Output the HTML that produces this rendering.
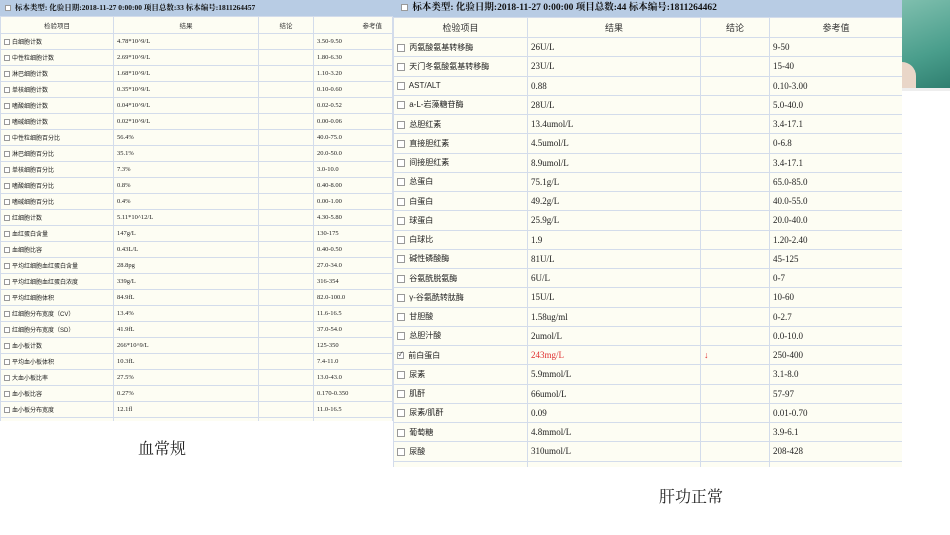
<!DOCTYPE html>
<html><head><meta charset="utf-8"><style>
body{margin:0;width:950px;height:535px;background:#fff;position:relative;overflow:hidden;font-family:"Liberation Serif","Noto Serif CJK SC",serif;}
.p{position:absolute;background:#fdfdf3;overflow:hidden;}
.bar{background:#b8cce4;color:#111;font-weight:bold;white-space:nowrap;}
table{border-collapse:collapse;table-layout:fixed;position:absolute;left:0;}
td{border:1px solid #d3dceb;white-space:nowrap;overflow:hidden;padding:0 0 0 3px;color:#222;vertical-align:middle;}
th{border:1px solid #d3dceb;font-weight:normal;color:#333;font-family:"Liberation Sans","Noto Sans CJK SC",sans-serif;}
td.n{font-family:"Liberation Sans","Noto Sans CJK SC",sans-serif;}
#L td.n{font-size:6px;}
#R td.n{font-size:8px;}
.cb{display:inline-block;border:1px solid #999;background:#fff;vertical-align:middle;margin-right:2px;}
#L .cb{width:4px;height:4px;}
#R .cb{width:6px;height:6px;}
.lab{position:absolute;font-size:16px;color:#222;}
</style></head><body>
<div class="p" id="L" style="left:0;top:0;width:394px;height:421px;">
<div class="bar" style="height:16px;line-height:16px;font-size:7.5px;padding-left:5px;"><span class="cb" style="width:4px;height:4px"></span> 标本类型: 化验日期:2018-11-27 0:00:00 项目总数:33 标本编号:1811264457</div>
<table style="top:16px;width:392px;font-size:6.5px;">
<colgroup><col style="width:113px"><col style="width:145px"><col style="width:55px"><col style="width:79px"></colgroup>
<tr style="height:17px"><th>检验项目</th><th>结果</th><th>结论</th><th style="text-align:right;padding-right:10px">参考值</th></tr>
<tbody id="lb"></tbody></table></div>
<div class="p" id="R" style="left:393px;top:0;width:509px;height:467px;">
<div class="bar" style="height:17px;line-height:17px;font-size:9.5px;padding-left:8px;"><span class="cb" style="width:5px;height:5px"></span> 标本类型: 化验日期:2018-11-27 0:00:00 项目总数:44 标本编号:1811264462</div>
<table style="top:17px;width:509px;font-size:9px;">
<colgroup><col style="width:134px"><col style="width:173px"><col style="width:69px"><col style="width:133px"></colgroup>
<tr style="height:20px"><th>检验项目</th><th>结果</th><th>结论</th><th>参考值</th></tr>
<tbody id="rb"></tbody></table></div>
<div style="position:absolute;left:902px;top:0;width:48px;height:88px;background:linear-gradient(160deg,#7fbfae,#4a9e8c 60%,#2f7f70);"></div>
<div style="position:absolute;left:902px;top:62px;width:14px;height:26px;background:#e9d6c8;border-radius:0 14px 0 0;"></div>
<div style="position:absolute;left:902px;top:88px;width:48px;height:3px;background:#eee;"></div>
<div class="lab" style="left:138px;top:436px;">血常规</div>
<div class="lab" style="left:659px;top:484px;">肝功正常</div>
<script>
var L=[["白细胞计数","4.78*10^9/L","3.50-9.50"],["中性粒细胞计数","2.69*10^9/L","1.80-6.30"],["淋巴细胞计数","1.68*10^9/L","1.10-3.20"],["单核细胞计数","0.35*10^9/L","0.10-0.60"],["嗜酸细胞计数","0.04*10^9/L","0.02-0.52"],["嗜碱细胞计数","0.02*10^9/L","0.00-0.06"],["中性粒细胞百分比","56.4%","40.0-75.0"],["淋巴细胞百分比","35.1%","20.0-50.0"],["单核细胞百分比","7.3%","3.0-10.0"],["嗜酸细胞百分比","0.8%","0.40-8.00"],["嗜碱细胞百分比","0.4%","0.00-1.00"],["红细胞计数","5.11*10^12/L","4.30-5.80"],["血红蛋白含量","147g/L","130-175"],["血细胞比容","0.43L/L","0.40-0.50"],["平均红细胞血红蛋白含量","28.8pg","27.0-34.0"],["平均红细胞血红蛋白浓度","339g/L","316-354"],["平均红细胞体积","84.9fL","82.0-100.0"],["红细胞分布宽度（CV）","13.4%","11.6-16.5"],["红细胞分布宽度（SD）","41.9fL","37.0-54.0"],["血小板计数","266*10^9/L","125-350"],["平均血小板体积","10.3fL","7.4-11.0"],["大血小板比率","27.5%","13.0-43.0"],["血小板比容","0.27%","0.170-0.350"],["血小板分布宽度","12.1fl","11.0-16.5"],["","",""]];
var R=[["丙氨酸氨基转移酶","26U/L","","9-50"],["天门冬氨酸氨基转移酶","23U/L","","15-40"],["AST/ALT","0.88","","0.10-3.00"],["a-L-岩藻糖苷酶","28U/L","","5.0-40.0"],["总胆红素","13.4umol/L","","3.4-17.1"],["直接胆红素","4.5umol/L","","0-6.8"],["间接胆红素","8.9umol/L","","3.4-17.1"],["总蛋白","75.1g/L","","65.0-85.0"],["白蛋白","49.2g/L","","40.0-55.0"],["球蛋白","25.9g/L","","20.0-40.0"],["白球比","1.9","","1.20-2.40"],["碱性磷酸酶","81U/L","","45-125"],["谷氨酰脱氨酶","6U/L","","0-7"],["γ-谷氨酰转肽酶","15U/L","","10-60"],["甘胆酸","1.58ug/ml","","0-2.7"],["总胆汁酸","2umol/L","","0.0-10.0"],["前白蛋白","243mg/L","↓","250-400",1],["尿素","5.9mmol/L","","3.1-8.0"],["肌酐","66umol/L","","57-97"],["尿素/肌酐","0.09","","0.01-0.70"],["葡萄糖","4.8mmol/L","","3.9-6.1"],["尿酸","310umol/L","","208-428"],["","","",""]];
var h="";L.forEach(function(r){h+='<tr style="height:16px"><td class="n">'+(r[0]?'<span class="cb"></span>'+r[0]:'')+'</td><td>'+r[1]+'</td><td></td><td>'+r[2]+'</td></tr>';});
document.getElementById("lb").innerHTML=h;
h="";R.forEach(function(r){var c=r[4]?' style="color:#e03030"':'';h+='<tr style="height:19.25px"><td class="n">'+(r[0]?'<span class="cb"'+(r[4]?' style="width:5px;height:5px;font-size:6px;line-height:5px;text-align:center"':'')+'>'+(r[4]?'✓':'')+'</span> '+r[0]:'')+'</td><td'+c+'>'+r[1]+'</td><td'+c+'>'+r[2]+'</td><td>'+r[3]+'</td></tr>';});
document.getElementById("rb").innerHTML=h;
</script>
</body></html>
